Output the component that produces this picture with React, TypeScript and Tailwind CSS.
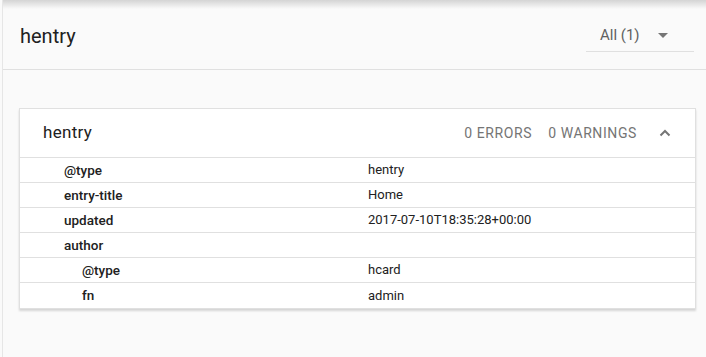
import React from "react";

const ROWS = [
  { key: "@type", value: "hentry", depth: 0 },
  { key: "entry-title", value: "Home", depth: 0 },
  { key: "updated", value: "2017-07-10T18:35:28+00:00", depth: 0 },
  { key: "author", value: "", depth: 0 },
  { key: "@type", value: "hcard", depth: 1 },
  { key: "fn", value: "admin", depth: 1 },
];

export default function App() {
  return (
    <div className="w-[706px] h-[357px] bg-[#fafafa] overflow-hidden font-['Roboto',sans-serif] text-[#212121]">
      <div className="relative h-full ml-[2px] border-l border-[#e6e6e6]">
        {/* app bar shadow from above */}
        <div className="absolute top-0 left-0 right-0 h-[9px] bg-gradient-to-b from-[#d4d4d4] to-[#fafafa]/0" />

        {/* header */}
        <div className="flex items-center justify-between h-[70px] border-b border-[#e0e0e0] pl-[17px] pr-[12px] pt-[2px]">
          <span className="text-[20px] leading-none">hentry</span>
          <div className="flex items-center justify-between w-[108px] h-[33px] border-b border-[#e0e0e0] pl-[14px] pr-[26px]">
            <span className="text-[15px] text-[#616161]">All (1)</span>
            <svg width="10" height="5" viewBox="0 0 10 5">
              <polygon points="0,0 10,0 5,5" fill="#757575" />
            </svg>
          </div>
        </div>

        {/* card */}
        <div className="ml-[16px] mr-[10px] mt-[38px] bg-white border border-[#e0e0e0] shadow-[0_2px_2px_rgba(0,0,0,0.15)]">
          <div className="flex items-center h-[49px] pl-[23px] pr-[24px] border-b border-[#e0e0e0]">
            <span className="text-[17px] tracking-[0.3px] flex-1">hentry</span>
            <span className="text-[14px] text-[#757575] tracking-[0.6px]">0 ERRORS</span>
            <span className="text-[14px] text-[#757575] tracking-[0.6px] ml-[16px]">0 WARNINGS</span>
            <svg className="ml-[22px]" width="12" height="8" viewBox="0 0 12 8">
              <polyline points="1.5,6.5 6,2 10.5,6.5" fill="none" stroke="#757575" strokeWidth="2" />
            </svg>
          </div>
          {ROWS.map((row, i) => (
            <div
              key={i}
              className={`flex items-center h-[25px] ${i < ROWS.length - 1 ? "border-b border-[#e0e0e0]" : ""}`}
            >
              <div className={`w-[348px] shrink-0 font-medium text-[13.5px] ${row.depth ? "pl-[62px]" : "pl-[44px]"}`}>
                {row.key}
              </div>
              <div className="text-[13px]">{row.value}</div>
            </div>
          ))}
        </div>
      </div>
    </div>
  );
}
